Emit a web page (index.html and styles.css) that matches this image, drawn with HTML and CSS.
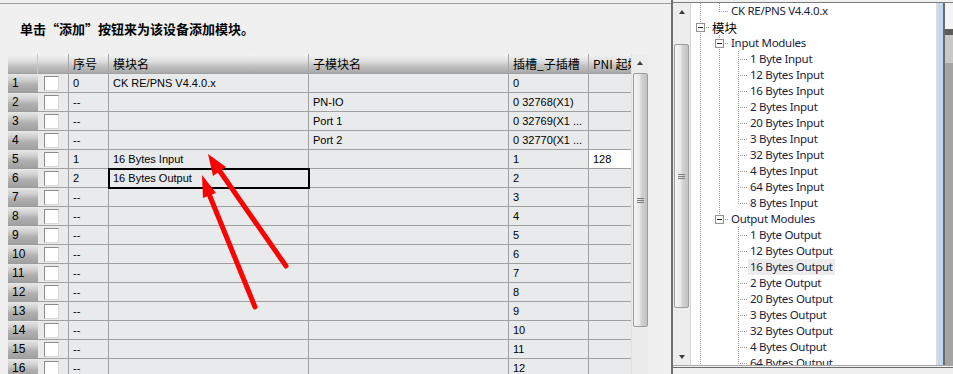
FILE: index.html
```html
<!DOCTYPE html>
<html>
<head>
<meta charset="utf-8">
<link rel="stylesheet" href="styles.css">
</head>
<body>
<div class="app">
  <div class="left">
    <div class="heading">单击“添加”按钮来为该设备添加模块。</div>
    <div class="gridwrap">
      <div class="viewport">
        <div class="row hdr">
          <div class="cell hc rh0"></div><div class="cell hc"></div><div class="cell hc">序号</div><div class="cell hc">模块名</div><div class="cell hc">子模块名</div><div class="cell hc">插槽_子插槽</div><div class="cell hc">PNI 起始地址</div>
        </div>
        <div class="row"><div class="cell rh">1</div><div class="cell cbc"><span class="cb"></span></div><div class="cell">0</div><div class="cell">CK RE/PNS V4.4.0.x</div><div class="cell"></div><div class="cell">0</div><div class="cell"></div></div>
        <div class="row"><div class="cell rh">2</div><div class="cell cbc"><span class="cb"></span></div><div class="cell">--</div><div class="cell"></div><div class="cell">PN-IO</div><div class="cell">0 32768(X1)</div><div class="cell"></div></div>
        <div class="row"><div class="cell rh">3</div><div class="cell cbc"><span class="cb"></span></div><div class="cell">--</div><div class="cell"></div><div class="cell">Port 1</div><div class="cell">0 32769(X1 ...</div><div class="cell"></div></div>
        <div class="row"><div class="cell rh">4</div><div class="cell cbc"><span class="cb"></span></div><div class="cell">--</div><div class="cell"></div><div class="cell">Port 2</div><div class="cell">0 32770(X1 ...</div><div class="cell"></div></div>
        <div class="row"><div class="cell rh">5</div><div class="cell cbc"><span class="cb"></span></div><div class="cell">1</div><div class="cell">16 Bytes Input</div><div class="cell"></div><div class="cell">1</div><div class="cell white">128</div></div>
        <div class="row"><div class="cell rh">6</div><div class="cell cbc"><span class="cb"></span></div><div class="cell">2</div><div class="cell sel">16 Bytes Output</div><div class="cell"></div><div class="cell">2</div><div class="cell"></div></div>
        <div class="row"><div class="cell rh">7</div><div class="cell cbc"><span class="cb"></span></div><div class="cell">--</div><div class="cell"></div><div class="cell"></div><div class="cell">3</div><div class="cell"></div></div>
        <div class="row"><div class="cell rh">8</div><div class="cell cbc"><span class="cb"></span></div><div class="cell">--</div><div class="cell"></div><div class="cell"></div><div class="cell">4</div><div class="cell"></div></div>
        <div class="row"><div class="cell rh">9</div><div class="cell cbc"><span class="cb"></span></div><div class="cell">--</div><div class="cell"></div><div class="cell"></div><div class="cell">5</div><div class="cell"></div></div>
        <div class="row"><div class="cell rh">10</div><div class="cell cbc"><span class="cb"></span></div><div class="cell">--</div><div class="cell"></div><div class="cell"></div><div class="cell">6</div><div class="cell"></div></div>
        <div class="row"><div class="cell rh">11</div><div class="cell cbc"><span class="cb"></span></div><div class="cell">--</div><div class="cell"></div><div class="cell"></div><div class="cell">7</div><div class="cell"></div></div>
        <div class="row"><div class="cell rh">12</div><div class="cell cbc"><span class="cb"></span></div><div class="cell">--</div><div class="cell"></div><div class="cell"></div><div class="cell">8</div><div class="cell"></div></div>
        <div class="row"><div class="cell rh">13</div><div class="cell cbc"><span class="cb"></span></div><div class="cell">--</div><div class="cell"></div><div class="cell"></div><div class="cell">9</div><div class="cell"></div></div>
        <div class="row"><div class="cell rh">14</div><div class="cell cbc"><span class="cb"></span></div><div class="cell">--</div><div class="cell"></div><div class="cell"></div><div class="cell">10</div><div class="cell"></div></div>
        <div class="row"><div class="cell rh">15</div><div class="cell cbc"><span class="cb"></span></div><div class="cell">--</div><div class="cell"></div><div class="cell"></div><div class="cell">11</div><div class="cell"></div></div>
        <div class="row"><div class="cell rh">16</div><div class="cell cbc"><span class="cb"></span></div><div class="cell">--</div><div class="cell"></div><div class="cell"></div><div class="cell">12</div><div class="cell"></div></div>
      </div>
      <div class="vscroll">
        <div class="sbtn"><span class="up"></span></div>
        <div class="thumb t1"><span class="grip"></span></div>
      </div>
    </div>
  </div>
  <div class="right">
    <div class="rbox">
      <div class="vscroll2">
        <div class="sbtn"><span class="up"></span></div>
        <div class="thumb t2"><span class="grip"></span></div>
        <div class="fill"></div>
        <div class="sbtn"><span class="down"></span></div>
      </div>
      <div class="tree">
        <div class="node"><span class="g v"></span><span class="g l"></span><span class="lbl">CK RE/PNS V4.4.0.x</span></div>
        <div class="node"><span class="g bx full"><span class="box"></span></span><span class="lbl cn">模块</span></div>
        <div class="node"><span class="g v"></span><span class="g bx full"><span class="box"></span></span><span class="lbl">Input Modules</span></div>
        <div class="node"><span class="g v"></span><span class="g v"></span><span class="g t"></span><span class="lbl">1 Byte Input</span></div>
        <div class="node"><span class="g v"></span><span class="g v"></span><span class="g t"></span><span class="lbl">12 Bytes Input</span></div>
        <div class="node"><span class="g v"></span><span class="g v"></span><span class="g t"></span><span class="lbl">16 Bytes Input</span></div>
        <div class="node"><span class="g v"></span><span class="g v"></span><span class="g t"></span><span class="lbl">2 Bytes Input</span></div>
        <div class="node"><span class="g v"></span><span class="g v"></span><span class="g t"></span><span class="lbl">20 Bytes Input</span></div>
        <div class="node"><span class="g v"></span><span class="g v"></span><span class="g t"></span><span class="lbl">3 Bytes Input</span></div>
        <div class="node"><span class="g v"></span><span class="g v"></span><span class="g t"></span><span class="lbl">32 Bytes Input</span></div>
        <div class="node"><span class="g v"></span><span class="g v"></span><span class="g t"></span><span class="lbl">4 Bytes Input</span></div>
        <div class="node"><span class="g v"></span><span class="g v"></span><span class="g t"></span><span class="lbl">64 Bytes Input</span></div>
        <div class="node"><span class="g v"></span><span class="g v"></span><span class="g l"></span><span class="lbl">8 Bytes Input</span></div>
        <div class="node"><span class="g v"></span><span class="g bx half"><span class="box"></span></span><span class="lbl">Output Modules</span></div>
        <div class="node"><span class="g v"></span><span class="g"></span><span class="g t"></span><span class="lbl">1 Byte Output</span></div>
        <div class="node"><span class="g v"></span><span class="g"></span><span class="g t"></span><span class="lbl">12 Bytes Output</span></div>
        <div class="node"><span class="g v"></span><span class="g"></span><span class="g t"></span><span class="lbl hl">16 Bytes Output</span></div>
        <div class="node"><span class="g v"></span><span class="g"></span><span class="g t"></span><span class="lbl">2 Byte Output</span></div>
        <div class="node"><span class="g v"></span><span class="g"></span><span class="g t"></span><span class="lbl">20 Bytes Output</span></div>
        <div class="node"><span class="g v"></span><span class="g"></span><span class="g t"></span><span class="lbl">3 Bytes Output</span></div>
        <div class="node"><span class="g v"></span><span class="g"></span><span class="g t"></span><span class="lbl">32 Bytes Output</span></div>
        <div class="node"><span class="g v"></span><span class="g"></span><span class="g t"></span><span class="lbl">4 Bytes Output</span></div>
        <div class="node"><span class="g v"></span><span class="g"></span><span class="g t"></span><span class="lbl">64 Bytes Output</span></div>
      </div>
      <div class="edge"></div>
    </div>
    <div class="rfoot"></div>
  </div>
</div>
<svg class="arrows" width="953" height="374" viewBox="0 0 953 374">
  <line x1="286" y1="266" x2="219" y2="170" stroke="#ff0000" stroke-width="5" stroke-linecap="round"/>
  <polygon points="208,154 226,167 213,176" fill="#ff0000"/>
  <line x1="255" y1="307" x2="209" y2="194" stroke="#ff0000" stroke-width="5" stroke-linecap="round"/>
  <polygon points="202,175 216,193 203,198" fill="#ff0000"/>
</svg>
</body>
</html>
```

FILE: styles.css
```css
html, body { margin: 0; padding: 0; }
body {
  width: 953px; height: 374px; overflow: hidden;
  background: #f0f0f0;
  font-family: "Liberation Sans", Arial, sans-serif;
  color: #000;
  position: relative;
}
.app { display: flex; height: 374px; }

.left {
  width: 671px; flex: none;
  margin-top: 3px;
  border-top: 1px solid #a0a0a0;
}
.heading {
  margin: 15px 0 0 20px;
  height: 16px; line-height: 16px;
  font: bold 13px "Noto Sans CJK SC", sans-serif;
}
.gridwrap { display: flex; margin: 19px 0 0 8px; }
.viewport { width: 623px; height: 320px; overflow: hidden; flex: none; }

.row {
  display: grid;
  grid-template-columns: 30px 31px 40px 200px 200px 80px 120px;
  height: 19px;
  width: 701px;
}
.row.hdr { height: 20px; }
.cell {
  box-sizing: border-box;
  border-right: 1px solid #a0a0a0;
  border-bottom: 1px solid #a0a0a0;
  background: #e9eaec;
  padding-left: 4px;
  font-size: 11px;
  line-height: 18px;
  white-space: nowrap;
  overflow: hidden;
}
.hc {
  background: linear-gradient(#f4f4f4 0%, #dedede 40%, #c4c4c4 60%, #a9a9a9 100%);
  font: 12px/19px "Noto Sans CJK SC", sans-serif;
  border-right-color: #a8a8a8;
}
.rh0 { border-right: 1px solid #c8c8c8; }
.rh {
  border-right: none;
  border-bottom: 1px solid #9c9c9c;
  background: linear-gradient(#e8e8e8 0%, #cdcdcd 35%, #b0b0b0 60%, #a0a0a0 100%);
  font-size: 12px;
  padding-left: 4px;
}
.cbc { display: flex; align-items: center; padding-left: 6px; }
.cb {
  width: 13px; height: 13px;
  background: #fff;
  border: 1px solid;
  border-color: #8c8c8c #d8d8d8 #d8d8d8 #8c8c8c;
}
.white { background: #fff; }
.sel { outline: 2px solid #000; outline-offset: -1px; position: relative; }

.vscroll {
  width: 16px; height: 320px; flex: none;
  background: #ececec;
  border-left: 1px solid #e2e2e2;
  display: flex; flex-direction: column; align-items: center;
}
.sbtn {
  height: 17px; width: 100%;
  display: flex; align-items: center; justify-content: center;
  flex: none;
}
.up {
  width: 0; height: 0;
  border-left: 3.5px solid transparent; border-right: 3.5px solid transparent;
  border-bottom: 4px solid #3c3c3c;
}
.down {
  width: 0; height: 0;
  border-left: 3.5px solid transparent; border-right: 3.5px solid transparent;
  border-top: 4px solid #3c3c3c;
}
.thumb {
  box-sizing: border-box;
  width: 15px;
  border: 1px solid #9c9c9c;
  border-radius: 2px;
  background: linear-gradient(to right, #f6f6f6 0%, #e8e8e8 45%, #d4d4d4 55%, #c2c2c2 100%);
  display: flex; align-items: center; justify-content: center;
  flex: none;
}
.t1 { height: 254px; margin-top: 2px; }
.t2 { height: 264px; margin-top: 24px; }
.grip {
  width: 7px; height: 5px;
  background: repeating-linear-gradient(#7a7a7a 0 1px, transparent 1px 2px);
}

.right {
  width: 282px; flex: none;
  box-sizing: border-box;
  border-left: 2px solid #6e6e6e;
  display: flex; flex-direction: column;
}
.rbox {
  margin-top: 2px;
  height: 362px;
  border-top: 1px solid #7c7c7c;
  border-bottom: 1px solid #a8a8a8;
  display: flex;
  flex: none;
}
.vscroll2 {
  width: 17px; flex: none;
  background: #ededed;
  border-right: 1px solid #d4d4d4;
  display: flex; flex-direction: column; align-items: center;
}
.vscroll2 .fill { flex: 1; }
.tree {
  width: 245px; flex: none;
  background: #fff;
  overflow: hidden;
  font: 11.5px "Noto Sans", "DejaVu Sans", sans-serif;
  letter-spacing: -0.3px;
  color: #1c1c3c;
}
.node { display: flex; height: 16px; align-items: center; white-space: nowrap; }
.g {
  width: 19px; height: 16px; flex: none;
  background-repeat: no-repeat;
  display: flex; align-items: center;
}
.g.v {
  background-image: repeating-linear-gradient(to bottom, #9a9a9a 0 1px, transparent 1px 2px);
  background-size: 1px 16px; background-position: 9px 0;
}
.g.t {
  background-image:
    repeating-linear-gradient(to bottom, #9a9a9a 0 1px, transparent 1px 2px),
    repeating-linear-gradient(to right, #9a9a9a 0 1px, transparent 1px 2px);
  background-size: 1px 16px, 9px 1px;
  background-position: 9px 0, 11px 8px;
}
.g.l {
  background-image:
    repeating-linear-gradient(to bottom, #9a9a9a 0 1px, transparent 1px 2px),
    repeating-linear-gradient(to right, #9a9a9a 0 1px, transparent 1px 2px);
  background-size: 1px 9px, 9px 1px;
  background-position: 9px 0, 11px 8px;
}
.g.bx.full {
  background-image:
    repeating-linear-gradient(to bottom, #9a9a9a 0 1px, transparent 1px 2px),
    repeating-linear-gradient(to right, #9a9a9a 0 1px, transparent 1px 2px);
  background-size: 1px 16px, 5px 1px;
  background-position: 9px 0, 15px 8px;
}
.g.bx.half {
  background-image:
    repeating-linear-gradient(to bottom, #9a9a9a 0 1px, transparent 1px 2px),
    repeating-linear-gradient(to right, #9a9a9a 0 1px, transparent 1px 2px);
  background-size: 1px 4px, 5px 1px;
  background-position: 9px 0, 15px 8px;
}
.box {
  box-sizing: border-box;
  width: 9px; height: 9px;
  margin-left: 5px;
  border: 1px solid #919191;
  background: linear-gradient(#2a2a2a, #2a2a2a) center / 5px 1px no-repeat, #fff;
}
.lbl { padding: 0 2px; line-height: 16px; }
.lbl.cn { font: 12.5px "Noto Sans CJK SC", sans-serif; color: #000; letter-spacing: 0; }
.lbl.hl { background: #ececec; }

.edge {
  flex: 1;
  background:
    linear-gradient(#f2f4f6 0 26px, #5c5c5c 26px 32px, #c8c8c8 32px 60px, #a4a4a4 60px) 9px 0 / 8px 100% no-repeat,
    linear-gradient(to right, #dcdcdc 0 2px, #c3d8ec 2px 7px, #6a6a6a 7px 9px, #b0b0b0 9px);
}
.rfoot {
  flex: 1;
  margin-top: 1px;
  border-top: 1px solid #6e6e6e;
}

.arrows { position: absolute; left: 0; top: 0; pointer-events: none; }
```
